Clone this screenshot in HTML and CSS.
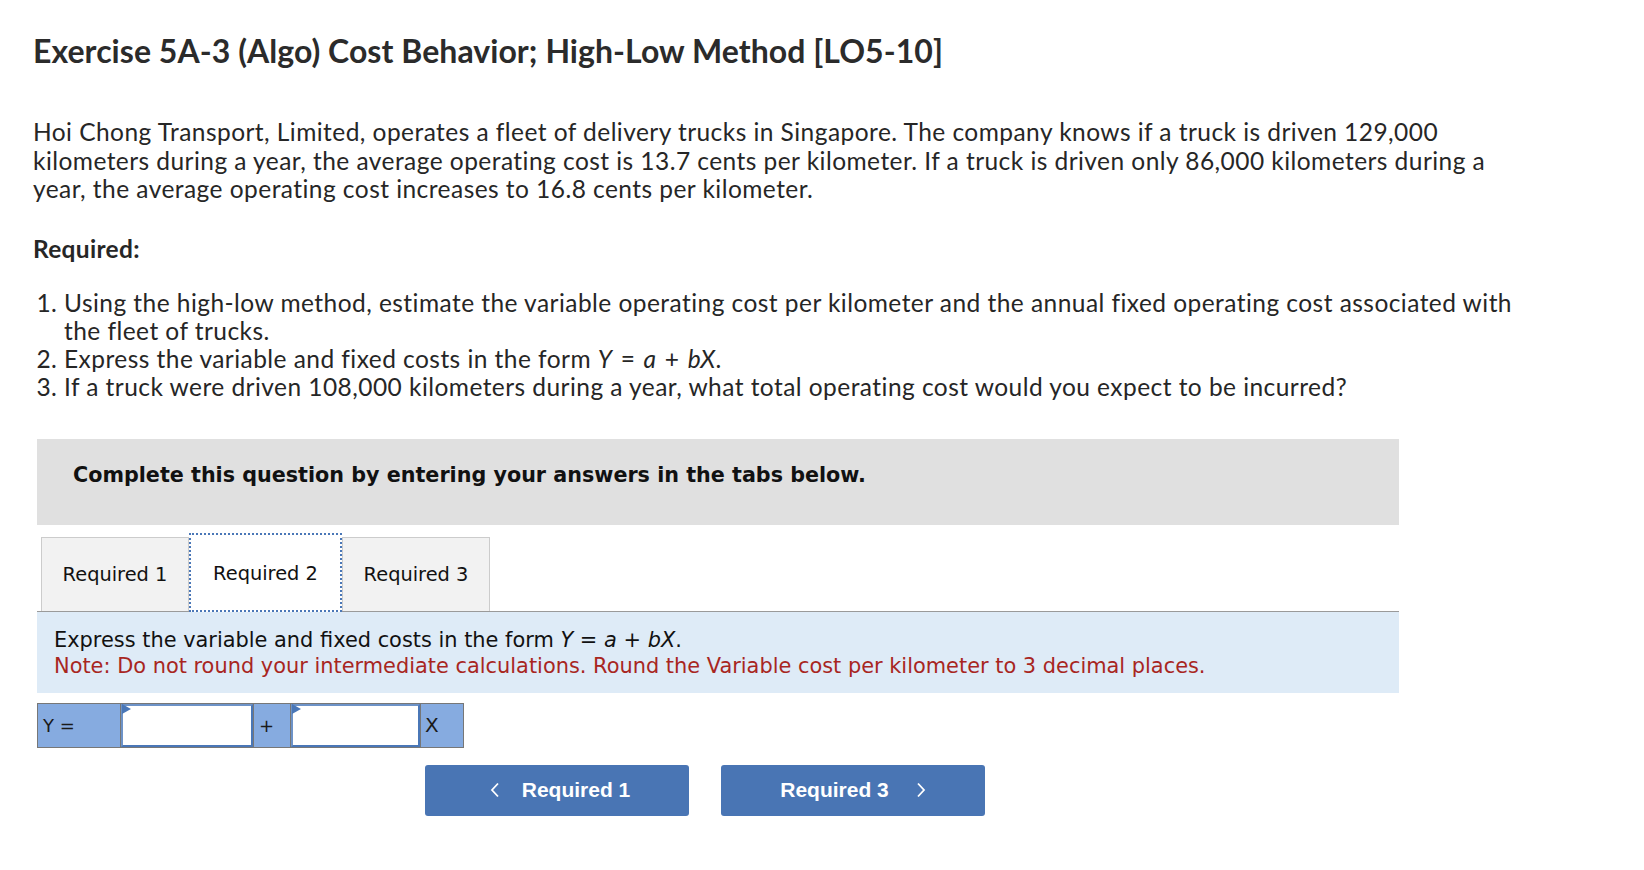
FILE: index.html
```html
<!DOCTYPE html>
<html lang="en">
<head>
<meta charset="utf-8">
<title>Exercise 5A-3</title>
<link rel="stylesheet" href="styles.css">
</head>
<body>
<main class="page">
  <h1 class="title">Exercise 5A-3 (Algo) Cost Behavior; High-Low Method [LO5-10]</h1>
  <p class="intro">Hoi Chong Transport, Limited, operates a fleet of delivery trucks in Singapore. The company knows if a truck is driven 129,000 kilometers during a year, the average operating cost is 13.7 cents per kilometer. If a truck is driven only 86,000 kilometers during a year, the average operating cost increases to 16.8 cents per kilometer.</p>
  <h2 class="req-head">Required:</h2>
  <ol class="req-list">
    <li>Using the high-low method, estimate the variable operating cost per kilometer and the annual fixed operating cost associated with the fleet of trucks.</li>
    <li>Express the variable and fixed costs in the form <span class="formula"><i>Y</i> = <i>a</i> + <i>bX</i></span>.</li>
    <li>If a truck were driven 108,000 kilometers during a year, what total operating cost would you expect to be incurred?</li>
  </ol>

  <section class="question">
    <div class="banner">Complete this question by entering your answers in the tabs below.</div>
    <div class="tabs">
      <div class="tab">Required 1</div>
      <div class="tab active">Required 2</div>
      <div class="tab">Required 3</div>
    </div>
    <div class="instructions">
      <div>Express the variable and fixed costs in the form <i>Y</i> = <i>a</i> + <i>bX</i>.</div>
      <div class="note">Note: Do not round your intermediate calculations. Round the Variable cost per kilometer to 3 decimal places.</div>
    </div>
    <div class="equation">
      <div class="cell label y">Y =</div>
      <div class="cell field f1"><span class="flag"></span></div>
      <div class="cell label op">+</div>
      <div class="cell field f2"><span class="flag"></span></div>
      <div class="cell label x">X</div>
    </div>
    <div class="nav">
      <button class="nav-btn prev" type="button">
        <svg class="chev" viewBox="0 0 10 16" width="10" height="16"><path d="M8 1.5 L2 8 L8 14.5" fill="none" stroke="#fff" stroke-width="1.8"/></svg>
        <span>Required 1</span>
      </button>
      <button class="nav-btn next" type="button">
        <span>Required 3</span>
        <svg class="chev" viewBox="0 0 10 16" width="10" height="16"><path d="M2 1.5 L8 8 L2 14.5" fill="none" stroke="#fff" stroke-width="1.8"/></svg>
      </button>
    </div>
  </section>
</main>
</body>
</html>
```

FILE: styles.css
```css
* { box-sizing: border-box; }

html, body {
  margin: 0;
  padding: 0;
  background: #ffffff;
}

body {
  font-family: Lato, "Liberation Sans", sans-serif;
  color: #262626;
}

.page {
  padding: 33px 0 0 33px;
  width: 1533px;
}

.title {
  margin: 0;
  font-size: 32px;
  line-height: 36px;
  font-weight: 700;
  letter-spacing: 0.05px;
  color: #2b2b2b;
}

.intro {
  margin: 49px 0 0;
  font-size: 24.5px;
  line-height: 28.5px;
  letter-spacing: 0.45px;
}

.req-head {
  margin: 31px 0 0;
  font-size: 24.5px;
  line-height: 28px;
  font-weight: 700;
  letter-spacing: 0.3px;
}

.req-list {
  margin: 26px 0 0;
  padding-left: 31px;
  font-size: 24.5px;
  line-height: 28px;
  letter-spacing: 0.45px;
}

.formula {
  word-spacing: 1.5px;
}

.question {
  margin: 38px 0 0 4px;
  width: 1362px;
  font-family: "DejaVu Sans", Verdana, sans-serif;
  color: #111;
}

.banner {
  height: 86px;
  padding: 24px 0 0 36px;
  background: #e0e0e0;
  font-size: 20.7px;
  line-height: 24px;
  font-weight: 700;
}

.tabs {
  display: flex;
  align-items: flex-end;
  margin-top: 9px;
  padding-left: 4px;
  height: 78px;
  border-bottom: 1px solid #9a9a9a;
}

.tab {
  width: 148px;
  height: 74px;
  display: flex;
  align-items: center;
  justify-content: center;
  background: #f2f2f2;
  border: 1px solid #cccccc;
  border-bottom: none;
  font-size: 19.4px;
  color: #111;
}

.tab.active {
  width: 153px;
  height: 79px;
  margin: 0 0 -1px;
  background: #ffffff;
  border: 2px dotted #4a77b7;
  padding-top: 2px;
}

.instructions {
  padding: 15px 17px 14px;
  background: #deebf7;
  font-size: 20.9px;
  line-height: 26px;
}

.note {
  color: #a8261f;
}

.equation {
  display: flex;
  margin-top: 10px;
  width: 427px;
  height: 45px;
  border: 1px solid #777777;
  background: #86abe0;
}

.cell {
  height: 100%;
  display: flex;
  align-items: center;
  font-size: 18px;
  color: #1a1a1a;
}

.label.y { width: 83px; padding-left: 5px; border-right: 1px solid #777; }
.label.op { width: 38px; padding-left: 5px; border-left: 1px solid #777; border-right: 1px solid #777; }
.label.x { flex: 1; padding-left: 4px; border-left: 1px solid #777; font-size: 20px; }

.field {
  position: relative;
  background: #ffffff;
  border: 2px solid #4a77b7;
  border-top-color: #6d93c8;
  border-left-color: #6d93c8;
}
.f1 { width: 132px; }
.f2 { width: 129px; }

.flag {
  position: absolute;
  left: -1px;
  top: -2px;
  width: 0;
  height: 0;
  border-top: 5px solid transparent;
  border-bottom: 5px solid transparent;
  border-left: 9px solid #4a77b7;
}

.nav {
  display: flex;
  gap: 32px;
  margin-top: 17px;
  padding-left: 388px;
}

.nav-btn {
  width: 264px;
  height: 51px;
  display: flex;
  align-items: center;
  justify-content: center;
  gap: 22px;
  background: #4975b4;
  border: none;
  border-radius: 3px;
  color: #ffffff;
  font-family: "Liberation Sans", Arial, sans-serif;
  font-size: 21px;
  font-weight: 700;
  padding: 0;
}

.nav-btn.prev { padding-left: 6px; }
.nav-btn.next { gap: 27px; padding-left: 0; }

.chev { display: block; }
```
